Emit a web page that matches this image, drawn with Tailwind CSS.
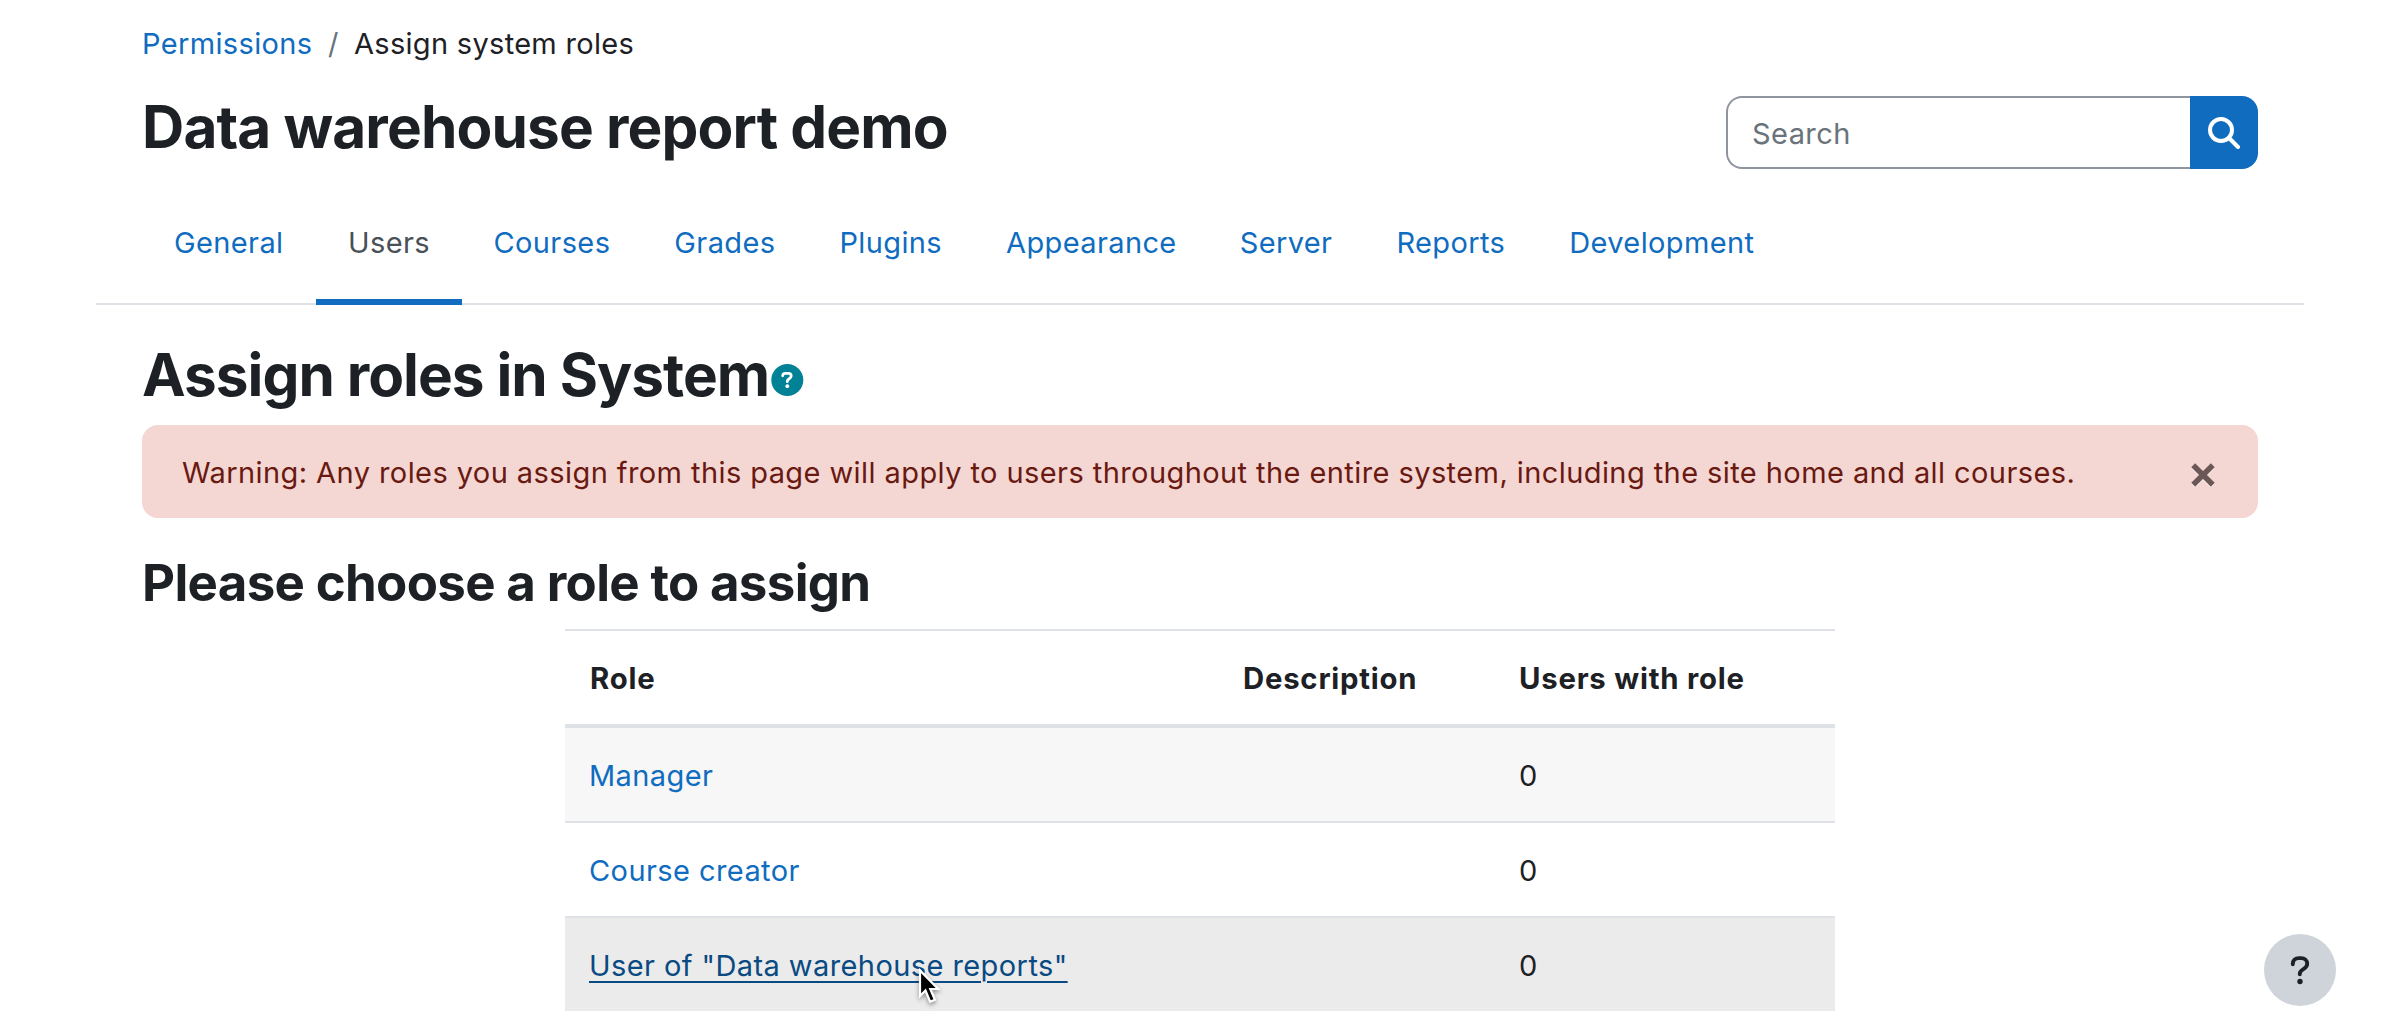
<!DOCTYPE html>
<html lang="en">
<head>
<meta charset="utf-8">
<title>Assign roles in System</title>
<script src="https://cdn.jsdelivr.net/npm/@tailwindcss/browser@4"></script>
</head>
<body class="relative h-[1026px] overflow-hidden bg-white font-['Inter',sans-serif] text-[29px] leading-[45px] tracking-[0.42px] text-[#1d2125]">

<header class="px-[142px] pt-[21px]">
  <nav class="flex h-[45px] gap-4" aria-label="Breadcrumb">
    <a href="#" class="w-[171px] whitespace-nowrap tracking-[0.35px] text-[#0f6cbf]">Permissions</a>
    <span class="-ml-px w-[10px] whitespace-nowrap text-[#6a737b]">/</span>
    <span class="whitespace-nowrap tracking-[0.3px]">Assign system roles</span>
  </nav>
  <div class="mt-[25px] flex h-[78px] items-start justify-between">
    <h1 class="whitespace-nowrap text-[58.5px] font-bold leading-[72px] tracking-[-0.85px]">Data warehouse report demo</h1>
    <form class="mt-[5px] flex h-[73px] w-[532px]">
      <div class="h-full flex-1 rounded-l-2xl border-2 border-r-0 border-[#8f959e] pl-6 pt-[13px] text-[#6a737b]">Search</div>
      <button type="button" class="h-full w-[68px] rounded-r-2xl bg-[#0f6cbf] pl-[18px]" aria-label="Search">
        <svg class="size-8 text-white" viewBox="0 0 32 32" fill="none" stroke="currentColor" stroke-width="4" stroke-linecap="round"><circle cx="13" cy="13" r="11"/><path d="M21 21l9 9"/></svg>
      </button>
    </form>
  </div>
</header>

<nav class="mx-24 mt-[30px] flex h-[106px] border-b-2 border-[#dee2e6] pl-[46px] tracking-[0.38px] text-[#0f6cbf]">
  <a href="#" class="h-[106px] w-[174px] pl-8 pt-[21px]">General</a>
  <a href="#" class="h-[106px] w-[146px] border-b-[6px] border-[#0f6cbf] pl-8 pt-[21px] text-[#495057]">Users</a>
  <a href="#" class="pl-[31.500px] pr-8 pt-[21px]">Courses</a>
  <a href="#" class="px-8 pt-[21px]">Grades</a>
  <a href="#" class="px-8 pt-[21px]">Plugins</a>
  <a href="#" class="px-8 pt-[21px]">Appearance</a>
  <a href="#" class="pl-[31px] pr-8 pt-[21px]">Server</a>
  <a href="#" class="px-8 pt-[21px]">Reports</a>
  <a href="#" class="px-8 pt-[21px]">Development</a>
</nav>

<main class="px-[142px] pt-[34px]">
  <div class="flex h-[72px] items-start">
    <h2 class="w-[629px] whitespace-nowrap text-[58.5px] font-bold leading-[72px] tracking-[-0.98px]">Assign roles in System</h2>
    <svg class="mt-[25px] size-8 overflow-visible" viewBox="0 0 32 32" fill="none"><circle cx="16.3" cy="16" r="16" fill="#008196"/><path d="M11.7 11.8c0-1.7 1.1-2.4 2.6-2.4h3.1c1.6 0 2.8 1.1 2.8 2.7 0 2.6-3.9 2.6-3.9 5.1v.5" stroke="#fff" stroke-width="2.8" stroke-linecap="round"/><circle cx="16.3" cy="22.2" r="1.9" fill="#fff"/></svg>
  </div>
  <div class="mt-[14px] flex h-[93px] rounded-2xl bg-[#f4d6d2] pl-10 pr-[43px] pt-[25px] text-[#691911]" role="alert">
    <p class="flex-1 whitespace-nowrap">Warning: Any roles you assign from this page will apply to users throughout the entire system, including the site home and all courses.</p>
    <svg class="mt-[13px] size-6" viewBox="0 0 24 24" fill="none" stroke-width="5.5"><path d="M2.2 3.2l19.6 19.6M21.8 3.2L2.2 22.8" stroke="#fff" opacity=".8"/><path d="M2.2 2.2l19.6 19.6M21.8 2.2L2.2 21.8" stroke="#6b5755"/></svg>
  </div>
  <h3 class="mt-[33px] whitespace-nowrap text-[51px] font-bold leading-[63px] tracking-[-0.67px]">Please choose a role to assign</h3>

  <table class="ml-[423px] mt-[15px] w-[1270px] table-fixed border-separate border-spacing-0 text-left">
    <colgroup><col class="w-[653px]"><col class="w-[276px]"><col></colgroup>
    <thead>
      <tr class="h-[99px] text-[29.3px] tracking-[0.78px]">
        <th class="border-b-4 border-t-2 border-[#dee2e6] pb-[23px] pl-[25px] pt-[25px] font-bold">Role</th>
        <th class="border-b-4 border-t-2 border-[#dee2e6] pb-[23px] pl-[25px] pt-[25px] font-bold">Description</th>
        <th class="border-b-4 border-t-2 border-[#dee2e6] pb-[23px] pl-[25px] pt-[25px] font-bold">Users with role</th>
      </tr>
    </thead>
    <tbody>
      <tr class="bg-[#f7f7f7]">
        <td class="px-6 pb-[23px] pt-[25px] text-[#0f6cbf]">Manager</td>
        <td></td>
        <td class="pb-[23px] pl-[25px] pt-[25px]">0</td>
      </tr>
      <tr>
        <td class="border-t-2 border-[#dee2e6] px-6 pb-[23px] pt-[25px] text-[#0f6cbf]">Course creator</td>
        <td class="border-t-2 border-[#dee2e6]"></td>
        <td class="border-t-2 border-[#dee2e6] pb-[23px] pl-[25px] pt-[25px]">0</td>
      </tr>
      <tr class="bg-[#ebebeb]">
        <td class="border-t-2 border-[#dee2e6] px-6 pb-[23px] pt-[25px] text-[#0a4a82]"><a href="#" class="underline decoration-2 underline-offset-[5px]">User of "Data warehouse reports"</a></td>
        <td class="border-t-2 border-[#dee2e6]"></td>
        <td class="border-t-2 border-[#dee2e6] pb-[23px] pl-[25px] pt-[25px]">0</td>
      </tr>
    </tbody>
  </table>
</main>

<!-- floating help button -->
<button type="button" class="absolute left-[2264px] top-[934px] size-[72px] rounded-full bg-[#ced4da]" aria-label="Help">
  <svg class="size-[72px]" viewBox="0 0 72 72" fill="none"><path d="M28.8 30.2V30c0-3.6 2.5-5.9 6-5.9h2.4c3.3 0 6 2.4 6 5.7 0 2.7-1.6 4-3.8 5.3-2.2 1.3-3.6 2.3-3.6 4.7v.5" stroke="#1d2125" stroke-width="3.9" stroke-linecap="round"/><circle cx="36" cy="47.5" r="2.7" fill="#1d2125"/></svg>
</button>

<!-- mouse pointer -->
<svg class="absolute left-[914px] top-[964px] h-[44px] w-[34px] drop-shadow-[0_2px_2px_rgba(0,0,0,0.4)]" viewBox="0 0 34 44"><path d="M6 6.500V32l5.500-5.500 4.600 11.200 4.800-2-4.600-10.700h7.900z" fill="#000" stroke="#fff" stroke-width="2.200"/></svg>
</body>
</html>
